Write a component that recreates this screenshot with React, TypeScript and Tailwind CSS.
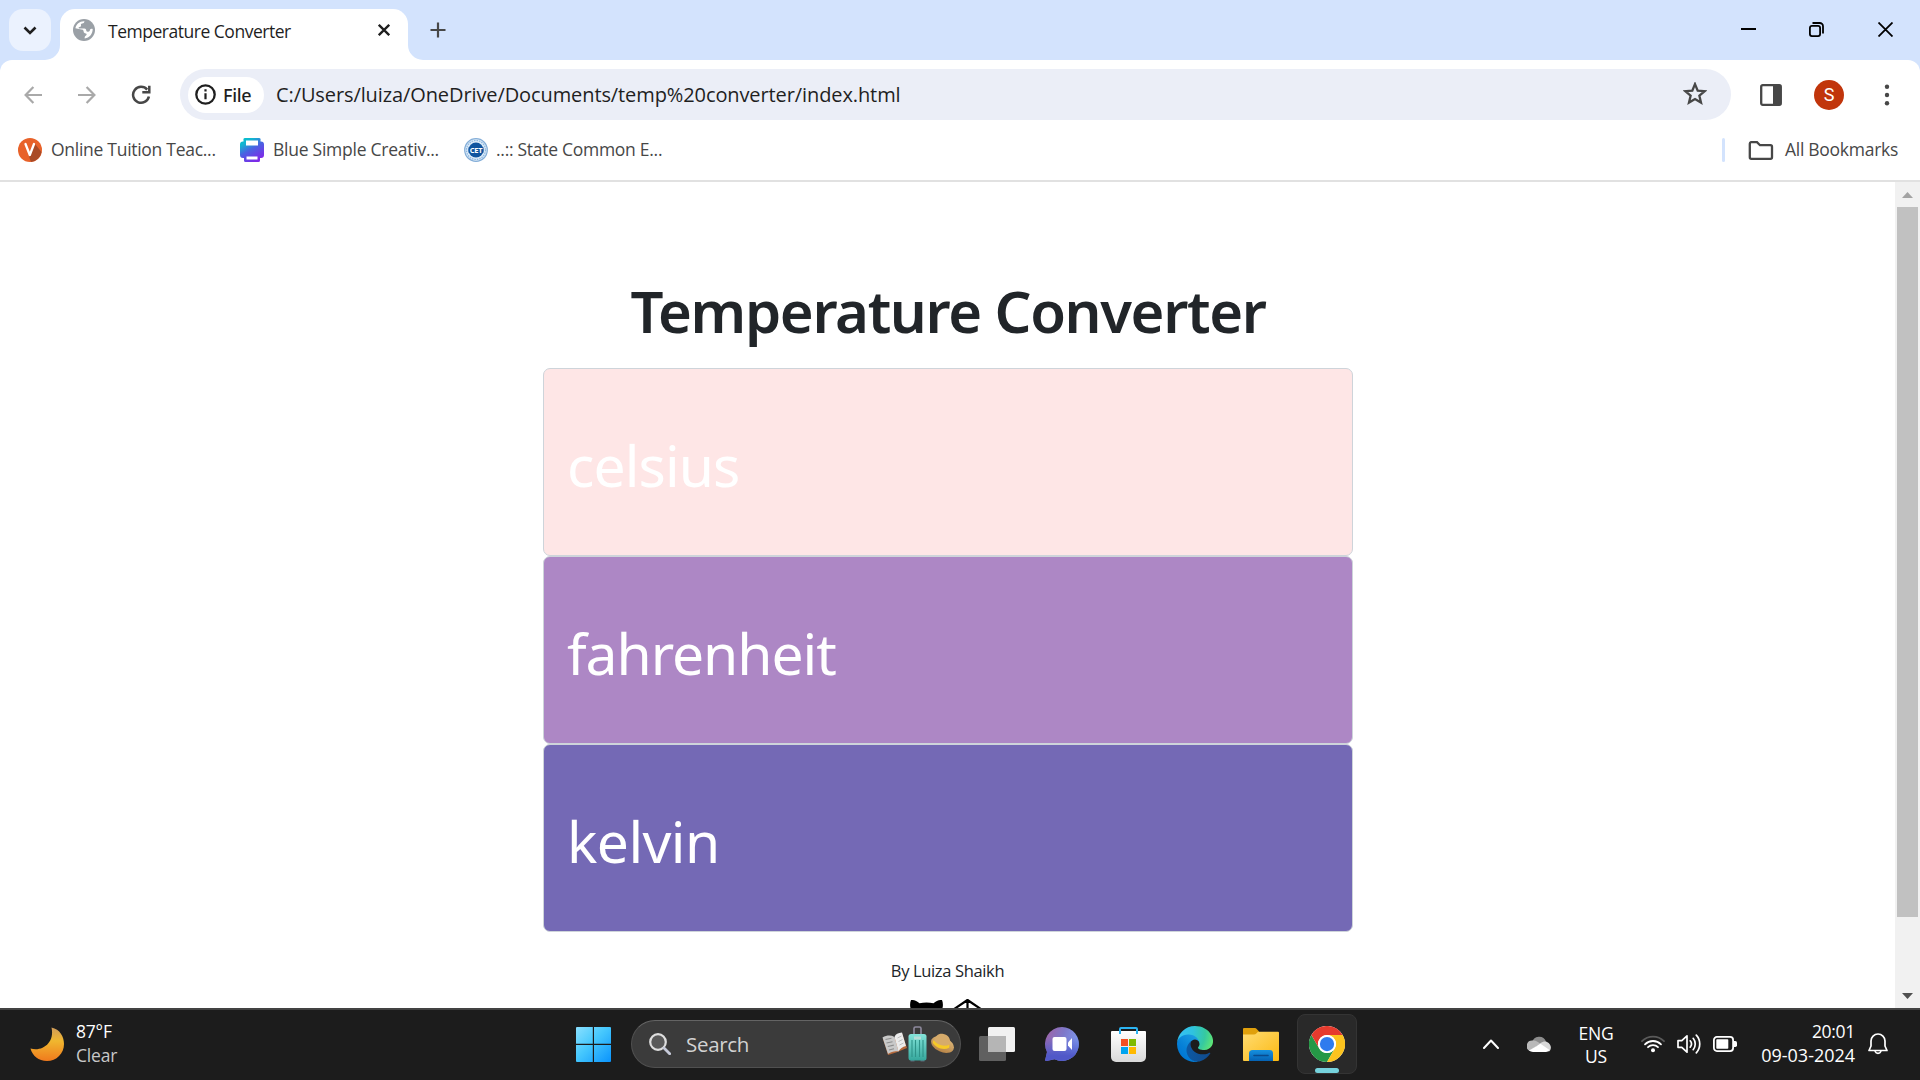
import type { ReactNode } from "react";

/* ---------- Browser chrome ---------- */

function Flare({ className }: { className: string }) {
  return (
    <svg viewBox="0 0 15 15" className={"absolute bottom-0 h-[15px] w-[15px] text-white " + className}>
      <path d="M15 0v15H0A15 15 0 0 0 15 0Z" fill="currentColor" />
    </svg>
  );
}

function TabStrip() {
  return (
    <div className="flex h-[60px] items-end bg-[#d3e3fd]">
      <button className="mb-[9px] ml-[9px] flex h-[42px] w-[42px] items-center justify-center rounded-[14px] bg-[#ebf2fe]">
        <svg viewBox="0 0 14 9" className="h-[9px] w-[14px]" fill="none" stroke="#1f1f1f" strokeWidth="2.6">
          <path d="M1.5 1.5 7 7l5.500-5.500" />
        </svg>
      </button>
      <div className="relative ml-[9px] flex h-[51px] w-[348px] items-center rounded-t-[15px] bg-white pb-[9px] pl-[13px]">
        <Flare className="-left-[15px]" />
        <Flare className="-right-[15px] -scale-x-100" />
        <svg viewBox="0 0 22 22" className="h-[22px] w-[22px]">
          <circle cx="11" cy="11" r="11" fill="#9aa0a6" />
          <path d="M11.500 2.300c-.3 1.600-1 2-2.300 2.200-1.200.2-1.400.8-1.200 1.600.3 1.300-.3 2-1.600 2-.9.100-1 .8-.4 1.300l5.300.1c1.700.1 2 1.300 2 2.300.2.900 1 1 1.800 1 1.500 0 1.800-1 2-2.200.3-.8 1.200-1 2.600-.7 0 5-3.300 8.900-8 9.500-.2-1.400.2-2.300 1.300-2.900.9-.5.8-1.700-.1-2-1.500-.3-2.200-.9-2.300-2.300-.1-1.200-.9-1.700-2.200-1.700L2.400 9.300C3.200 5 6.800 2 11.500 2.300Z" fill="#fff" />
        </svg>
        <span className="ml-[13px] mt-[2px] w-[270px] whitespace-nowrap text-[17.5px] leading-[24px] tracking-[-0.48px] text-[#1f1f1f]">
          Temperature Converter
        </span>
        <svg viewBox="0 0 12 12" className="h-[12px] w-[12px] shrink-0" stroke="#1f1f1f" strokeWidth="2.300">
          <path d="m.8.8 10.400 10.400M11.200.8.8 11.200" />
        </svg>
      </div>
      <svg viewBox="0 0 16 16" className="mb-[22px] ml-[22px] h-[16px] w-[16px]" stroke="#474747" strokeWidth="2.200">
        <path d="M8 .5v15M.5 8h15" />
      </svg>
      <div className="mb-[23px] ml-auto mr-[27px] flex items-center">
        <svg viewBox="0 0 15 16" className="h-[16px] w-[15px]" stroke="#000" strokeWidth="2">
          <path d="M0 8h15" />
        </svg>
        <svg viewBox="0 0 15 15" className="ml-[53px] h-[15px] w-[15px]" fill="none" stroke="#000" strokeWidth="1.800">
          <rect x=".9" y="3.900" width="10.200" height="10.200" rx="2" />
          <path d="M3.500 1h7.200A3.300 3.300 0 0 1 14 4.300v7.200" />
        </svg>
        <svg viewBox="0 0 15 15" className="ml-[54px] h-[15px] w-[15px]" stroke="#000" strokeWidth="1.800">
          <path d="m.5.5 14 14M14.500.5l-14 14" />
        </svg>
      </div>
    </div>
  );
}

function AddressRow() {
  return (
    <div className="bg-[#d3e3fd]">
      <div className="flex h-[68px] items-center rounded-t-[12px] bg-white pt-px">
        <svg viewBox="0 0 18 18" className="ml-[24px] h-[18px] w-[18px]" fill="none" stroke="#a9a9a9" strokeWidth="2.200">
          <path d="M9.400 1 1.600 9l7.800 8M1.600 9H18" />
        </svg>
        <svg viewBox="0 0 18 18" className="ml-[36px] h-[18px] w-[18px]" fill="none" stroke="#a9a9a9" strokeWidth="2.200">
          <path d="m8.600 1 7.800 8-7.800 8M16.400 9H0" />
        </svg>
        <svg viewBox="0 0 20 20" className="ml-[35px] h-[20px] w-[20px]" fill="none" stroke="#474747" strokeWidth="2.500">
          <path d="M16.200 4.600A8 8 0 1 0 17.900 11.500" />
          <path d="M18.300.8v6.500h-7" />
        </svg>
        <div className="ml-[29px] flex h-[51px] w-[1551px] items-center rounded-full bg-[#ebeef7] pl-[8px] pr-[24px]">
          <div className="flex h-[36px] w-[76px] items-center rounded-full bg-white pl-[7px]">
            <svg viewBox="0 0 21 21" className="h-[21px] w-[21px]" fill="none" stroke="#1f1f1f">
              <circle cx="10.500" cy="10.500" r="9.200" strokeWidth="2.300" />
              <path d="M10.500 9.300v6M10.500 5.300v2.200" strokeWidth="2.200" />
            </svg>
            <span className="ml-[7px] whitespace-nowrap font-['Noto_Sans'] text-[18px] font-medium leading-[24px] tracking-[-0.3px] text-[#1f1f1f]">File</span>
          </div>
          <span className="ml-[12px] whitespace-nowrap text-[20px] leading-[24px] tracking-[-0.1px] text-[#1f1f1f]">
            C:/Users/luiza/OneDrive/Documents/temp%20converter/index.html
          </span>
          <svg viewBox="0 0 24 24" className="mb-px ml-auto h-[24px] w-[24px]" fill="none" stroke="#474747" strokeWidth="2">
            <path
              d="m12 3.200 2.350 5.650 6.100.5-4.650 4 1.420 5.950L12 16.150 6.780 19.300l1.420-5.950-4.650-4 6.100-.5Z"
              transform="matrix(1.150 0 0 1.150 -1.800 -1.600)"
            />
          </svg>
        </div>
        <svg viewBox="0 0 22 22" className="ml-[29px] h-[22px] w-[22px]">
          <rect x="1.200" y="1.200" width="19.600" height="19.600" rx="1.500" fill="none" stroke="#474747" strokeWidth="2.300" />
          <path d="M13 1h8v20h-8z" fill="#474747" />
        </svg>
        <div className="ml-[32px] flex h-[30px] w-[30px] items-center justify-center rounded-full bg-[#c1350b] font-['Roboto'] text-[18px] leading-none text-white">
          <span className="mt-px">S</span>
        </div>
        <svg viewBox="0 0 6 22" className="ml-[40px] h-[22px] w-[6px]" fill="#474747">
          <circle cx="3" cy="2.700" r="2.200" />
          <circle cx="3" cy="11" r="2.200" />
          <circle cx="3" cy="19.300" r="2.200" />
        </svg>
      </div>
    </div>
  );
}

function Bookmark({ icon, children, className }: { icon: ReactNode; children: ReactNode; className: string }) {
  return (
    <div className={"flex items-center whitespace-nowrap text-[17.5px] leading-[24px] text-[#474747] " + className}>
      {icon}
      <span className="mb-[2px]">{children}</span>
    </div>
  );
}

function BookmarksBar() {
  return (
    <div className="flex h-[54px] items-center border-b-2 border-[#e1e1e1] bg-white pb-[8px] pl-[18px] pr-[22px]">
      <Bookmark
        className="w-[222px] gap-[9px] tracking-[-0.28px]"
        icon={
          <svg viewBox="0 0 24 24" className="h-[24px] w-[24px]">
            <circle cx="12" cy="12" r="12" fill="#e8622a" />
            <path d="m17 6 6.500 8A12 12 0 0 1 13 23.900L11 18.500Z" fill="#a94a26" />
            <path d="m7.500 6 4.300 11 4.200-11" fill="none" stroke="#fff" strokeWidth="2.300" strokeLinecap="round" strokeLinejoin="round" />
          </svg>
        }
      >
        Online Tuition Teac...
      </Bookmark>
      <Bookmark
        className="w-[224px] gap-[9px] tracking-[-0.25px]"
        icon={
          <svg viewBox="0 0 24 24" className="h-[24px] w-[24px]">
            <defs>
              <linearGradient id="printer" x1="0" y1="0" x2=".6" y2="1">
                <stop offset="0" stopColor="#00c4cc" />
                <stop offset=".25" stopColor="#12b5d0" />
                <stop offset=".55" stopColor="#4a62e2" />
                <stop offset="1" stopColor="#7d2ae8" />
              </linearGradient>
            </defs>
            <path d="M5 0h14a1.500 1.500 0 0 1 1.500 2v1.500H21a3 3 0 0 1 3 3V17a3 3 0 0 1-3 3h-1v2.500a1.500 1.500 0 0 1-1.500 1.500h-13A1.500 1.500 0 0 1 4 22.500V20H3a3 3 0 0 1-3-3V6.500a3 3 0 0 1 3-3h.5V2A1.500 1.500 0 0 1 5 0Z" fill="url(#printer)" />
            <path d="M6 2.500h12v5H6zM6.500 18.500h11v3h-11z" fill="#fff" />
          </svg>
        }
      >
        Blue Simple Creativ...
      </Bookmark>
      <Bookmark
        className="gap-[8px] tracking-[-0.28px]"
        icon={
          <svg viewBox="0 0 24 24" className="h-[24px] w-[24px]">
            <circle cx="12" cy="12" r="11.300" fill="#dceaf7" stroke="#84aed8" strokeWidth="1.200" />
            <circle cx="12" cy="12" r="9.500" fill="none" stroke="#8db8e0" strokeWidth="1.200" strokeDasharray="1.500 1" />
            <circle cx="12" cy="12" r="7.500" fill="#10559f" />
            <path d="M4.500 9.300h15v5.400h-15z" fill="#10559f" />
            <text x="12" y="14.700" textAnchor="middle" fontSize="7.500" fontWeight="700" fill="#fff">CET</text>
          </svg>
        }
      >
        ..:: State Common E...
      </Bookmark>
      <div className="ml-auto h-[24px] w-[3px] rounded-full bg-[#d3e3fd]" />
      <Bookmark
        className="ml-[23px] gap-[11px] tracking-[-0.28px]"
        icon={
          <svg viewBox="0 0 26 20" className="h-[20px] w-[26px]" fill="none" stroke="#474747" strokeWidth="2.300">
            <path d="M3 2.200h6l3 3h10.500a1.500 1.500 0 0 1 1.500 1.500v10.600a1.500 1.500 0 0 1-1.500 1.500H3.300a1.500 1.500 0 0 1-1.500-1.500V3.700A1.500 1.500 0 0 1 3 2.200Z" />
          </svg>
        }
      >
        All Bookmarks
      </Bookmark>
    </div>
  );
}

/* ---------- Page ---------- */

const fields = [
  { name: "celsius", look: "bg-[#fee6e6] tracking-[-0.9px]" },
  { name: "fahrenheit", look: "bg-[#ad87c5] tracking-[-1.05px]" },
  { name: "kelvin", look: "bg-[#7469b5] tracking-[-0.6px]" },
];

function Converter() {
  return (
    <main className="flex flex-1 flex-col items-center bg-white pl-px pt-[93px]">
      <h1 className="mb-[21px] whitespace-nowrap text-[58px] font-semibold leading-[72px] tracking-[-1.35px] text-[#212529]">
        Temperature Converter
      </h1>
      {fields.map((f) => (
        <div
          key={f.name}
          className={"flex h-[188px] w-[810px] shrink-0 items-center rounded-[7px] border border-[#ced4da] pl-[23px] pt-[6px] font-['Noto_Sans'] text-[57px] leading-[90px] text-white " + f.look}
        >
          {f.name}
        </div>
      ))}
      <p className="mr-px mt-[27px] whitespace-nowrap text-[16.5px] leading-[24px] tracking-[-0.35px] text-[#212529]">By Luiza Shaikh</p>
      <div className="mr-px mt-[15px] flex h-[10px] w-[75px] shrink-0 items-start gap-[9px] overflow-hidden">
        <svg viewBox="0 0 33 30" className="mt-[2px] h-[30px] w-[33px] shrink-0">
          <path d="M1 0C3.500-.3 7 1 9.500 3.200c4.500-.9 9.500-.9 14 0C26 1 29.500-.3 32 0c1 2.500 1.200 5 .5 8v10c0 7-6 11-16 11S.5 25 .5 18V8C-.2 5 0 2.500 1 0Z" fill="#000" />
        </svg>
        <svg viewBox="0 0 32 32" className="h-[32px] w-[32px] shrink-0" fill="none" stroke="#000" strokeWidth="2.200" strokeLinejoin="round">
          <path d="M15.500 2 1.500 11.500v10l14 9.500 14-9.500v-10L15.500 2Zm0 0v9.500M1.500 11.500l14 9.500 14-9.500M1.500 21.500l14-9.500 14 9.500M15.500 31V21" />
        </svg>
      </div>
    </main>
  );
}

function Scrollbar() {
  return (
    <div className="flex w-[25px] flex-col items-center bg-[#f1f1f1]">
      <svg viewBox="0 0 11 6" className="mt-[10px] h-[6px] w-[11px]">
        <path d="M5.500 0 11 6H0Z" fill="#a3a3a3" />
      </svg>
      <div className="mt-[9px] h-[710px] w-[21px] bg-[#c1c1c1]" />
      <svg viewBox="0 0 11 6" className="mt-[76px] h-[6px] w-[11px]">
        <path d="M5.500 6 11 0H0Z" fill="#505050" />
      </svg>
    </div>
  );
}

/* ---------- Taskbar ---------- */

function MoonIcon() {
  return (
    <svg viewBox="0 0 34 34" className="ml-[30px] h-[34px] w-[34px] shrink-0">
      <defs>
        <linearGradient id="moon" x1="0" y1="0" x2="0" y2="1">
          <stop offset="0" stopColor="#cf9b5a" />
          <stop offset=".4" stopColor="#f0b72f" />
          <stop offset="1" stopColor="#f07a1d" />
        </linearGradient>
      </defs>
      <path d="M21.500.5C30 2.500 34 9.500 34 17c0 9.500-7.500 17-17 17C8.500 34 2.500 29 .5 21.500 12 25 25 16 21.500.5Z" fill="url(#moon)" />
    </svg>
  );
}

function StartIcon() {
  return (
    <svg viewBox="0 0 35 35" className="h-[35px] w-[35px]">
      <defs>
        <linearGradient id="start" gradientUnits="userSpaceOnUse" x1="0" y1="0" x2="35" y2="35">
          <stop offset="0" stopColor="#8ae0ff" />
          <stop offset=".45" stopColor="#46c8fd" />
          <stop offset="1" stopColor="#0a93fc" />
        </linearGradient>
      </defs>
      <path d="M1 0h15.800v16.800H0V1a1 1 0 0 1 1-1ZM18 0h16a1 1 0 0 1 1 1v15.800H18ZM0 18h16.800v17H1a1 1 0 0 1-1-1ZM18 18h17v16a1 1 0 0 1-1 1H18Z" fill="url(#start)" />
    </svg>
  );
}

function TravelArt() {
  return (
    <svg viewBox="0 0 74 36" className="ml-auto h-[36px] w-[74px]">
      <defs>
        <linearGradient id="case" x1="0" y1="0" x2="0" y2="1">
          <stop offset="0" stopColor="#84e4da" />
          <stop offset="1" stopColor="#35a79c" />
        </linearGradient>
        <linearGradient id="hat" x1="0" y1="0" x2="0" y2="1">
          <stop offset="0" stopColor="#dcb679" />
          <stop offset="1" stopColor="#b78447" />
        </linearGradient>
      </defs>
      <path d="m1 13 5 16 8-2.500 11-4.500-5-14.500-7 4.500Z" fill="#b5683a" />
      <path d="M.5 11.500C5 9 9 9 12.500 11l4 14.500c-4-.8-7 .3-10.500 2.500Z" fill="#c9c9c9" />
      <path d="M12.500 11c1-3 3.500-4 7.500-4.500l4 13.500c-3.500 1-6 2.500-7.500 5.500Z" fill="#ececec" />
      <path d="m3.500 13.500 6-1.200M4.500 17l6-1.300M5.800 20.500l6-1.400M7 24l5-1.300" stroke="#8e8e8e" strokeWidth="1.100" />
      <path d="m15.500 12 4-2M16.500 15.500l4-2M17.500 19l4-2" stroke="#bdbdbd" strokeWidth="1" />
      <path d="M32 11V2.500A1.500 1.500 0 0 1 33.500 1h4A1.500 1.500 0 0 1 39 2.500V11" fill="none" stroke="#8f8a9e" strokeWidth="1.600" />
      <path d="M28.500 33h4v2.500h-4zM38.500 33h4v2.500h-4z" fill="#5d6676" />
      <rect x="26.500" y="8" width="18" height="26.500" rx="2.500" fill="url(#case)" />
      <path d="M30 14v17M33.500 14v17M37.500 14v17M41 14v17" stroke="#2e9389" strokeWidth="1.100" />
      <path d="M32 10.500h7v3h-7z" fill="#b7ddd8" />
      <ellipse cx="60.500" cy="18.500" rx="12" ry="7.500" transform="rotate(24 60.500 18.500)" fill="url(#hat)" />
      <path d="M52 15.500c1-6 5-8.500 9.500-7.500 5 1 7.500 5 6.500 10-4 4-12 3-16-2.500Z" fill="#d6ab6b" />
      <path d="M51.500 14c4 5.500 11 7 16 4.500l-.3 3.300c-6 3-13.500 0-16.500-5Z" fill="#f6c927" />
    </svg>
  );
}

function TaskViewIcon() {
  return (
    <svg viewBox="0 0 36 34" className="h-[34px] w-[36px]">
      <rect x="9" y="0" width="27" height="25" rx="1.500" fill="#f1f1f1" />
      <rect x="0" y="9" width="27" height="25" rx="1.500" fill="#606060" />
      <path d="M9 9h18v16H9z" fill="#b5b5b5" />
    </svg>
  );
}

function ChatIcon() {
  const bubble = "M17 0a17 17 0 1 1-7.500 32.300L1.500 34C.5 34 0 33.500.3 32.500L2 25A17 17 0 0 1 17 0Z";
  return (
    <svg viewBox="0 0 34 34" className="h-[34px] w-[34px]">
      <defs>
        <linearGradient id="chat" x1="0" y1=".1" x2="1" y2=".5">
          <stop offset="0" stopColor="#a062a4" />
          <stop offset=".5" stopColor="#7e78c9" />
          <stop offset="1" stopColor="#7c9cf2" />
        </linearGradient>
        <linearGradient id="chatShade" x1="0" y1="0" x2="0" y2="1">
          <stop offset=".3" stopColor="#5059c9" stopOpacity="0" />
          <stop offset=".85" stopColor="#5058c8" />
        </linearGradient>
      </defs>
      <path d={bubble} fill="url(#chat)" />
      <path d={bubble} fill="url(#chatShade)" />
      <rect x="7.500" y="10" width="14" height="14" rx="2" fill="#fff" />
      <path d="M23 15.500 27 11v12l-4-4.500Z" fill="#fff" />
    </svg>
  );
}

function StoreIcon() {
  return (
    <svg viewBox="0 0 35 35" className="h-[35px] w-[35px]">
      <defs>
        <linearGradient id="bag" x1="0" y1="0" x2="0" y2="1">
          <stop offset="0" stopColor="#fff" />
          <stop offset="1" stopColor="#d9d9d9" />
        </linearGradient>
      </defs>
      <path d="M1 4h33a1 1 0 0 1 1 1v25a5 5 0 0 1-5 5H5a5 5 0 0 1-5-5V5a1 1 0 0 1 1-1Z" fill="url(#bag)" />
      <path d="M9 7V2a1 1 0 0 1 1-1h15a1 1 0 0 1 1 1v5" fill="none" stroke="#2cb4f2" strokeWidth="2" />
      <path d="M10 12h7v7h-7z" fill="#f25022" />
      <path d="M18 12h7v7h-7z" fill="#7fba00" />
      <path d="M10 20h7v7h-7z" fill="#00a4ef" />
      <path d="M18 20h7v7h-7z" fill="#ffb900" />
    </svg>
  );
}

function EdgeIcon() {
  return (
    <svg viewBox="0 0 256 256" className="h-[36px] w-[36px]">
      <defs>
        <linearGradient id="edgeA" gradientUnits="userSpaceOnUse" x1="63" y1="178" x2="241" y2="178">
          <stop offset="0" stopColor="#0c59a4" />
          <stop offset="1" stopColor="#114a8b" />
        </linearGradient>
        <linearGradient id="edgeB" gradientUnits="userSpaceOnUse" x1="157" y1="100" x2="46" y2="221">
          <stop offset="0" stopColor="#1b9de2" />
          <stop offset=".16" stopColor="#1595df" />
          <stop offset=".67" stopColor="#0680d7" />
          <stop offset="1" stopColor="#0078d4" />
        </linearGradient>
        <radialGradient id="edgeC" gradientUnits="userSpaceOnUse" cx="26" cy="47" r="250">
          <stop offset="0" stopColor="#35c1f1" />
          <stop offset=".35" stopColor="#2fc2df" />
          <stop offset=".7" stopColor="#36c9a0" />
          <stop offset="1" stopColor="#66eb6e" />
        </radialGradient>
      </defs>
      <path d="M231 190.500c-3.400 1.800-6.900 3.400-10.500 4.700a101.900 101.900 0 0 1-35.900 6.500c-47.300 0-88.500-32.500-88.500-74.300a31.500 31.500 0 0 1 16.400-27.300c-42.800 1.800-53.800 46.400-53.800 72.500 0 73.900 68.100 81.400 82.800 81.400 7.900 0 19.800-2.300 27-4.600l1.300-.4a128.300 128.300 0 0 0 66.600-52.800 4 4 0 0 0-5.400-5.700Z" fill="url(#edgeA)" />
      <path d="M105.700 241.400a79.200 79.200 0 0 1-22.700-21.300 80.700 80.700 0 0 1 29.500-120c3.200-1.500 8.500-4.100 15.600-4a32.400 32.400 0 0 1 25.700 13 31.900 31.900 0 0 1 6.300 18.700c0-.2 24.500-79.600-80-79.600-43.900 0-80 41.600-80 78.200a130.200 130.200 0 0 0 12.100 56 128 128 0 0 0 156.400 67.100 75.500 75.500 0 0 1-62.800-8Z" fill="url(#edgeB)" />
      <path d="M152.300 148.900c-.9 1-3.300 2.500-3.300 5.700 0 2.600 1.700 5.200 4.800 7.300 14.400 10.100 41.700 8.700 41.800 8.700a59.600 59.600 0 0 0 30.300-8.300 61.400 61.400 0 0 0 30.400-52.900c.3-22.400-8-37.300-11.300-43.900C223.600 23.900 177.700 0 127.700 0A128 128 0 0 0 0 126.200c.5-36.500 36.800-66 80-66 3.500 0 23.500.3 42 10a72.600 72.600 0 0 1 30.900 29.300c6.100 10.600 7.200 24.100 7.200 29.500 0 5.300-2.700 13.300-7.800 19.900Z" fill="url(#edgeC)" />
    </svg>
  );
}

function ExplorerIcon() {
  return (
    <svg viewBox="0 0 36 33" className="h-[33px] w-[36px]">
      <defs>
        <linearGradient id="folder" x1="0" y1="0" x2="1" y2="1">
          <stop offset="0" stopColor="#ffdc72" />
          <stop offset="1" stopColor="#fcb912" />
        </linearGradient>
        <linearGradient id="pocket" x1="0" y1="0" x2="0" y2="1">
          <stop offset="0" stopColor="#1590df" />
          <stop offset="1" stopColor="#0562b4" />
        </linearGradient>
      </defs>
      <path d="M1 0h10.500c1 0 1.500.3 2.200 1l2.300 2.500V8H0V1a1 1 0 0 1 1-1Z" fill="#e0a00c" />
      <path d="M0 6.500h11c1 0 1.700-.4 2.300-1L15 3.700h20a1 1 0 0 1 1 1V32a1 1 0 0 1-1 1H1a1 1 0 0 1-1-1Z" fill="url(#folder)" />
      <path d="M6 33v-7.500a3.500 3.500 0 0 1 3.500-3.500h17a3.500 3.500 0 0 1 3.500 3.500V33Z" fill="url(#pocket)" />
      <path d="M11 27.500h14" stroke="#0a4a8c" strokeWidth="1.600" strokeLinecap="round" />
    </svg>
  );
}

function ChromeIcon() {
  return (
    <svg viewBox="0 0 48 48" className="h-[36px] w-[36px]">
      <circle cx="24" cy="24" r="24" fill="#fff" />
      <path d="M3.200 12a24 24 0 0 0 20.800 36l10.400-18a12 12 0 0 1-20.800 0Z" fill="#259846" />
      <path d="M24 48A24 24 0 0 0 44.800 12H24a12 12 0 0 1 10.400 18Z" fill="#fcc31e" />
      <path d="M44.800 12A24 24 0 0 0 3.200 12l10.400 18A12 12 0 0 1 24 12Z" fill="#e63b2e" />
      <circle cx="24" cy="24" r="12" fill="#fff" />
      <circle cx="24" cy="24" r="9.500" fill="#2f7bee" />
    </svg>
  );
}

function Tray() {
  return (
    <div className="ml-auto flex items-center">
      <svg viewBox="0 0 16 10" className="h-[10px] w-[16px]" fill="none" stroke="#fff" strokeWidth="2" strokeLinecap="round" strokeLinejoin="round">
        <path d="m1 9 7-7.500L15 9" />
      </svg>
      <svg viewBox="0 0 24 16" className="ml-[28px] h-[16px] w-[24px]">
        <path d="M5 6.500a7.300 7.300 0 0 1 14-1l-5 5Z" fill="#8d8d8d" />
        <path d="M5.500 4.500c3-.5 5 .8 8 3.500L2.500 15A5.600 5.600 0 0 1 5.500 4.500Z" fill="#b9b9b9" />
        <path d="M13 7.500c3-2 5-2.500 7-1.500 4.500 2 5 7 2 9.500L10 10Z" fill="#d9d9d9" />
        <path d="M2 14.500 13.500 7.700 22.500 14a5 5 0 0 1-3.500 2H6a6 6 0 0 1-4-1.500Z" fill="#fff" />
      </svg>
      <div className="ml-[26px] mt-px w-[38px] text-center text-[17.5px] leading-[23px] tracking-[-0.2px] text-white">
        <div>ENG</div>
        <div>US</div>
      </div>
      <svg viewBox="0 0 24 18" className="ml-[26px] h-[18px] w-[24px]" fill="none" strokeWidth="1.800" strokeLinecap="round">
        <path d="M1 6.200a15.500 15.500 0 0 1 22 0" stroke="#5a5a5a" />
        <path d="M4 9.300a11.300 11.300 0 0 1 16 0M7 12.200a7 7 0 0 1 10 0" stroke="#fff" />
        <circle cx="12" cy="15.300" r="2" fill="#fff" />
      </svg>
      <svg viewBox="0 0 24 20" className="ml-[12px] h-[20px] w-[24px]" fill="none" stroke="#fff" strokeWidth="1.700" strokeLinecap="round" strokeLinejoin="round">
        <path d="M1 6.700h3.800L10 1.800v16.400l-5.200-4.900H1ZM13.200 6.800a5 5 0 0 1 0 6.400M16.200 4.300a9 9 0 0 1 0 11.400M19.300 1.200a13 13 0 0 1 0 17.600" />
      </svg>
      <svg viewBox="0 0 24 16" className="ml-[12px] h-[16px] w-[24px]">
        <rect x=".9" y=".9" width="19.200" height="14.200" rx="3" fill="none" stroke="#fff" strokeWidth="1.800" />
        <rect x="3.300" y="3.300" width="12" height="9.400" rx=".8" fill="#fff" />
        <path d="M21 5h1.300A1.700 1.700 0 0 1 24 6.700v2.600a1.700 1.700 0 0 1-1.700 1.700H21Z" fill="#fff" />
      </svg>
      <div className="mb-[2px] w-[118px] whitespace-nowrap text-right leading-[24px] text-white">
        <div className="text-[17.5px] tracking-[-0.3px]">20:01</div>
        <div className="text-[18px] tracking-[-0.02px]">09-03-2024</div>
      </div>
      <svg viewBox="0 0 20 22" className="ml-[13px] mr-[32px] h-[22px] w-[20px]" fill="none" stroke="#fff" strokeWidth="1.700" strokeLinecap="round" strokeLinejoin="round">
        <path d="M10 1a7 7 0 0 0-7 7v5L1 17.500h18L17 13V8a7 7 0 0 0-7-7Z" />
        <path d="M7.200 18.500a3 3 0 0 0 5.600 0" />
      </svg>
    </div>
  );
}

function Taskbar() {
  return (
    <footer className="flex h-[72px] items-center border-t-2 border-[#434343] bg-[#1c1c1c] pb-[2px]">
      <MoonIcon />
      <div className="mb-[2px] ml-[12px] w-[500px] whitespace-nowrap text-[17.5px] leading-[24px] tracking-[-0.2px] text-white">
        <div>87°F</div>
        <div className="text-[#c8c8c8]">Clear</div>
      </div>
      <StartIcon />
      <div className="ml-[20px] flex h-[48px] w-[330px] items-center rounded-full border border-[#505050] border-t-[#646464] bg-[#3b3b3b] pl-[17px] pr-[4px]">
        <svg viewBox="0 0 22 22" className="h-[22px] w-[22px]" fill="none" stroke="#dedede" strokeWidth="2.200" strokeLinecap="round">
          <circle cx="9" cy="9" r="7.800" fill="#595959" />
          <path d="m15 15 5.700 5.700" stroke="#c5c9d8" strokeWidth="2.800" />
        </svg>
        <span className="ml-[15px] text-[20.5px] leading-[28px] tracking-[-0.3px] text-[#d2d2d2]">Search</span>
        <TravelArt />
      </div>
      <div className="ml-[18px] flex items-center">
        <TaskViewIcon />
        <div className="ml-[30px]"><ChatIcon /></div>
        <div className="ml-[32px]"><StoreIcon /></div>
        <div className="ml-[31px]"><EdgeIcon /></div>
        <div className="ml-[30px]"><ExplorerIcon /></div>
        <div className="relative ml-[18px] flex h-[60px] w-[60px] items-center justify-center rounded-[8px] border border-[#343434] bg-[#292929]">
          <ChromeIcon />
          <div className="absolute bottom-0 left-[17px] h-[5px] w-[24px] rounded-full bg-[#76d2dc]" />
        </div>
      </div>
      <Tray />
    </footer>
  );
}

export default function App() {
  return (
    <div className="flex h-[1080px] w-[1920px] flex-col overflow-hidden bg-white font-['Open_Sans','Noto_Sans',sans-serif] [&_h1]:font-['Noto_Sans',sans-serif] [&_svg]:block [&_svg]:shrink-0">
      <TabStrip />
      <AddressRow />
      <BookmarksBar />
      <div className="flex h-[826px] overflow-hidden">
        <Converter />
        <Scrollbar />
      </div>
      <Taskbar />
    </div>
  );
}
